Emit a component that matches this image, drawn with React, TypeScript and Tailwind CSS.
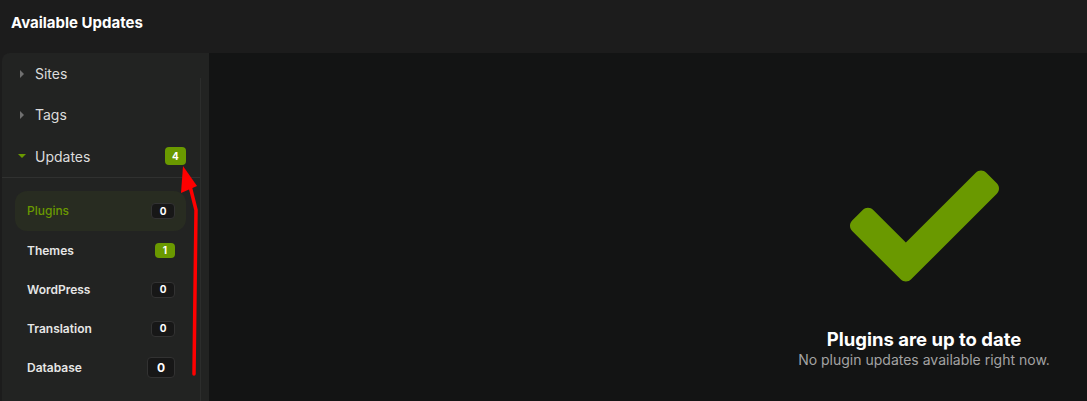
import React from "react";

const subItems = [
  { label: "Plugins", count: "0", active: true, badge: "dark", size: "sm" },
  { label: "Themes", count: "1", active: false, badge: "green", size: "sm" },
  { label: "WordPress", count: "0", active: false, badge: "dark", size: "sm" },
  { label: "Translation", count: "0", active: false, badge: "dark", size: "sm" },
  { label: "Database", count: "0", active: false, badge: "dark", size: "lg" },
];

function Caret({ open }: { open?: boolean }) {
  if (open) {
    return (
      <svg width="10" height="10" viewBox="0 0 10 10" className="shrink-0">
        <polygon points="1,3 9,3 5,7" fill="#6a9900" />
      </svg>
    );
  }
  return (
    <svg width="10" height="10" viewBox="0 0 10 10" className="shrink-0">
      <polygon points="3,1 7,5 3,9" fill="#707070" />
    </svg>
  );
}

export default function App() {
  return (
    <div
      className="relative w-[1087px] h-[401px] overflow-hidden bg-[#1c1c1c] flex flex-col"
      style={{ fontFamily: "Inter, 'Noto Sans', sans-serif" }}
    >
      <header className="h-[53px] shrink-0 flex items-start pl-[11px] pt-[13px]">
        <h1 className="text-[15px] font-bold text-white leading-[20px]">Available Updates</h1>
      </header>
      <div className="flex flex-1 min-h-0 pl-[2px]">
        <aside className="w-[207px] shrink-0 bg-[#222322] rounded-tl-[8px] flex">
          <div className="w-[198px] flex flex-col">
            <div className="h-[41px] flex items-center pl-[15px] gap-[8px]">
              <Caret />
              <span className="text-[14px] text-[#dcdcdc]">Sites</span>
            </div>
            <div className="h-[41px] flex items-center pl-[15px] gap-[8px]">
              <Caret />
              <span className="text-[14px] text-[#dcdcdc]">Tags</span>
            </div>
            <div className="h-[43px] flex items-center pl-[15px] gap-[8px] pr-[14px] border-b border-[#303130]">
              <Caret open />
              <span className="text-[14px] text-[#dcdcdc] flex-1">Updates</span>
              <span className="w-[21px] h-[18px] rounded-[4px] bg-[#6a9900] text-white text-[10px] font-bold flex items-center justify-center">
                4
              </span>
            </div>
            <div className="flex flex-col pl-[13px] pr-[14px] pt-[13px]">
              {subItems.map((it) => (
                <div
                  key={it.label}
                  className={
                    it.active
                      ? "h-[40px] rounded-[12px] bg-[#282c21] flex items-center justify-between pl-[12px] pr-[11px]"
                      : "h-[39px] flex items-center justify-between pl-[12px] pr-[11px]"
                  }
                >
                  <span
                    className={
                      it.active
                        ? "text-[12px] font-medium text-[#6a9900]"
                        : "text-[12px] font-semibold text-[#e6e6e6]"
                    }
                  >
                    {it.label}
                  </span>
                  {it.badge === "green" ? (
                    <span className="w-[20px] h-[15px] rounded-[4px] bg-[#6a9900] text-white text-[10px] font-bold flex items-center justify-center">
                      {it.count}
                    </span>
                  ) : it.size === "lg" ? (
                    <span className="w-[28px] h-[21px] rounded-[4px] bg-[#171717] border border-[#323232] text-white text-[12px] font-bold flex items-center justify-center">
                      {it.count}
                    </span>
                  ) : (
                    <span className="w-[24px] h-[16px] rounded-[4px] bg-[#171717] border border-[#323232] text-white text-[10px] font-bold flex items-center justify-center">
                      {it.count}
                    </span>
                  )}
                </div>
              ))}
            </div>
          </div>
          <div className="flex-1 flex flex-col">
            <div className="mt-[25px] flex-1 border-l border-[#2c2d2c]" />
          </div>
        </aside>
        <main className="flex-1 bg-[#131414] flex justify-end">
          <div className="w-[326px] flex flex-col items-center pt-[117px]">
            <svg width="149" height="112" viewBox="0 65 512 382">
              <path
                fill="#6a9900"
                d="M173.898 439.404l-166.4-166.4c-9.997-9.997-9.997-26.206 0-36.204l36.203-36.204c9.997-9.998 26.207-9.998 36.204 0L192 312.69 432.095 72.596c9.997-9.997 26.207-9.997 36.204 0l36.203 36.204c9.997 9.997 9.997 26.206 0 36.204l-294.4 294.401c-9.998 9.997-26.207 9.997-36.204-.001z"
              />
            </svg>
            <div className="mt-[46px] text-[18.5px] font-bold text-white leading-[22px]">
              Plugins are up to date
            </div>
            <div className="mt-[1px] text-[14px] text-[#a3a3a3] leading-[18px] whitespace-nowrap">
              No plugin updates available right now.
            </div>
          </div>
        </main>
      </div>
      <svg
        className="absolute left-0 top-0 pointer-events-none"
        width="1087"
        height="401"
        viewBox="0 0 1087 401"
      >
        <path
          d="M194 374 L196 210 L189 182"
          fill="none"
          stroke="#ff0000"
          strokeWidth="3.5"
          strokeLinecap="round"
          strokeLinejoin="round"
        />
        <polygon points="183,166 181,193 197,186" fill="#ff0000" />
      </svg>
    </div>
  );
}
